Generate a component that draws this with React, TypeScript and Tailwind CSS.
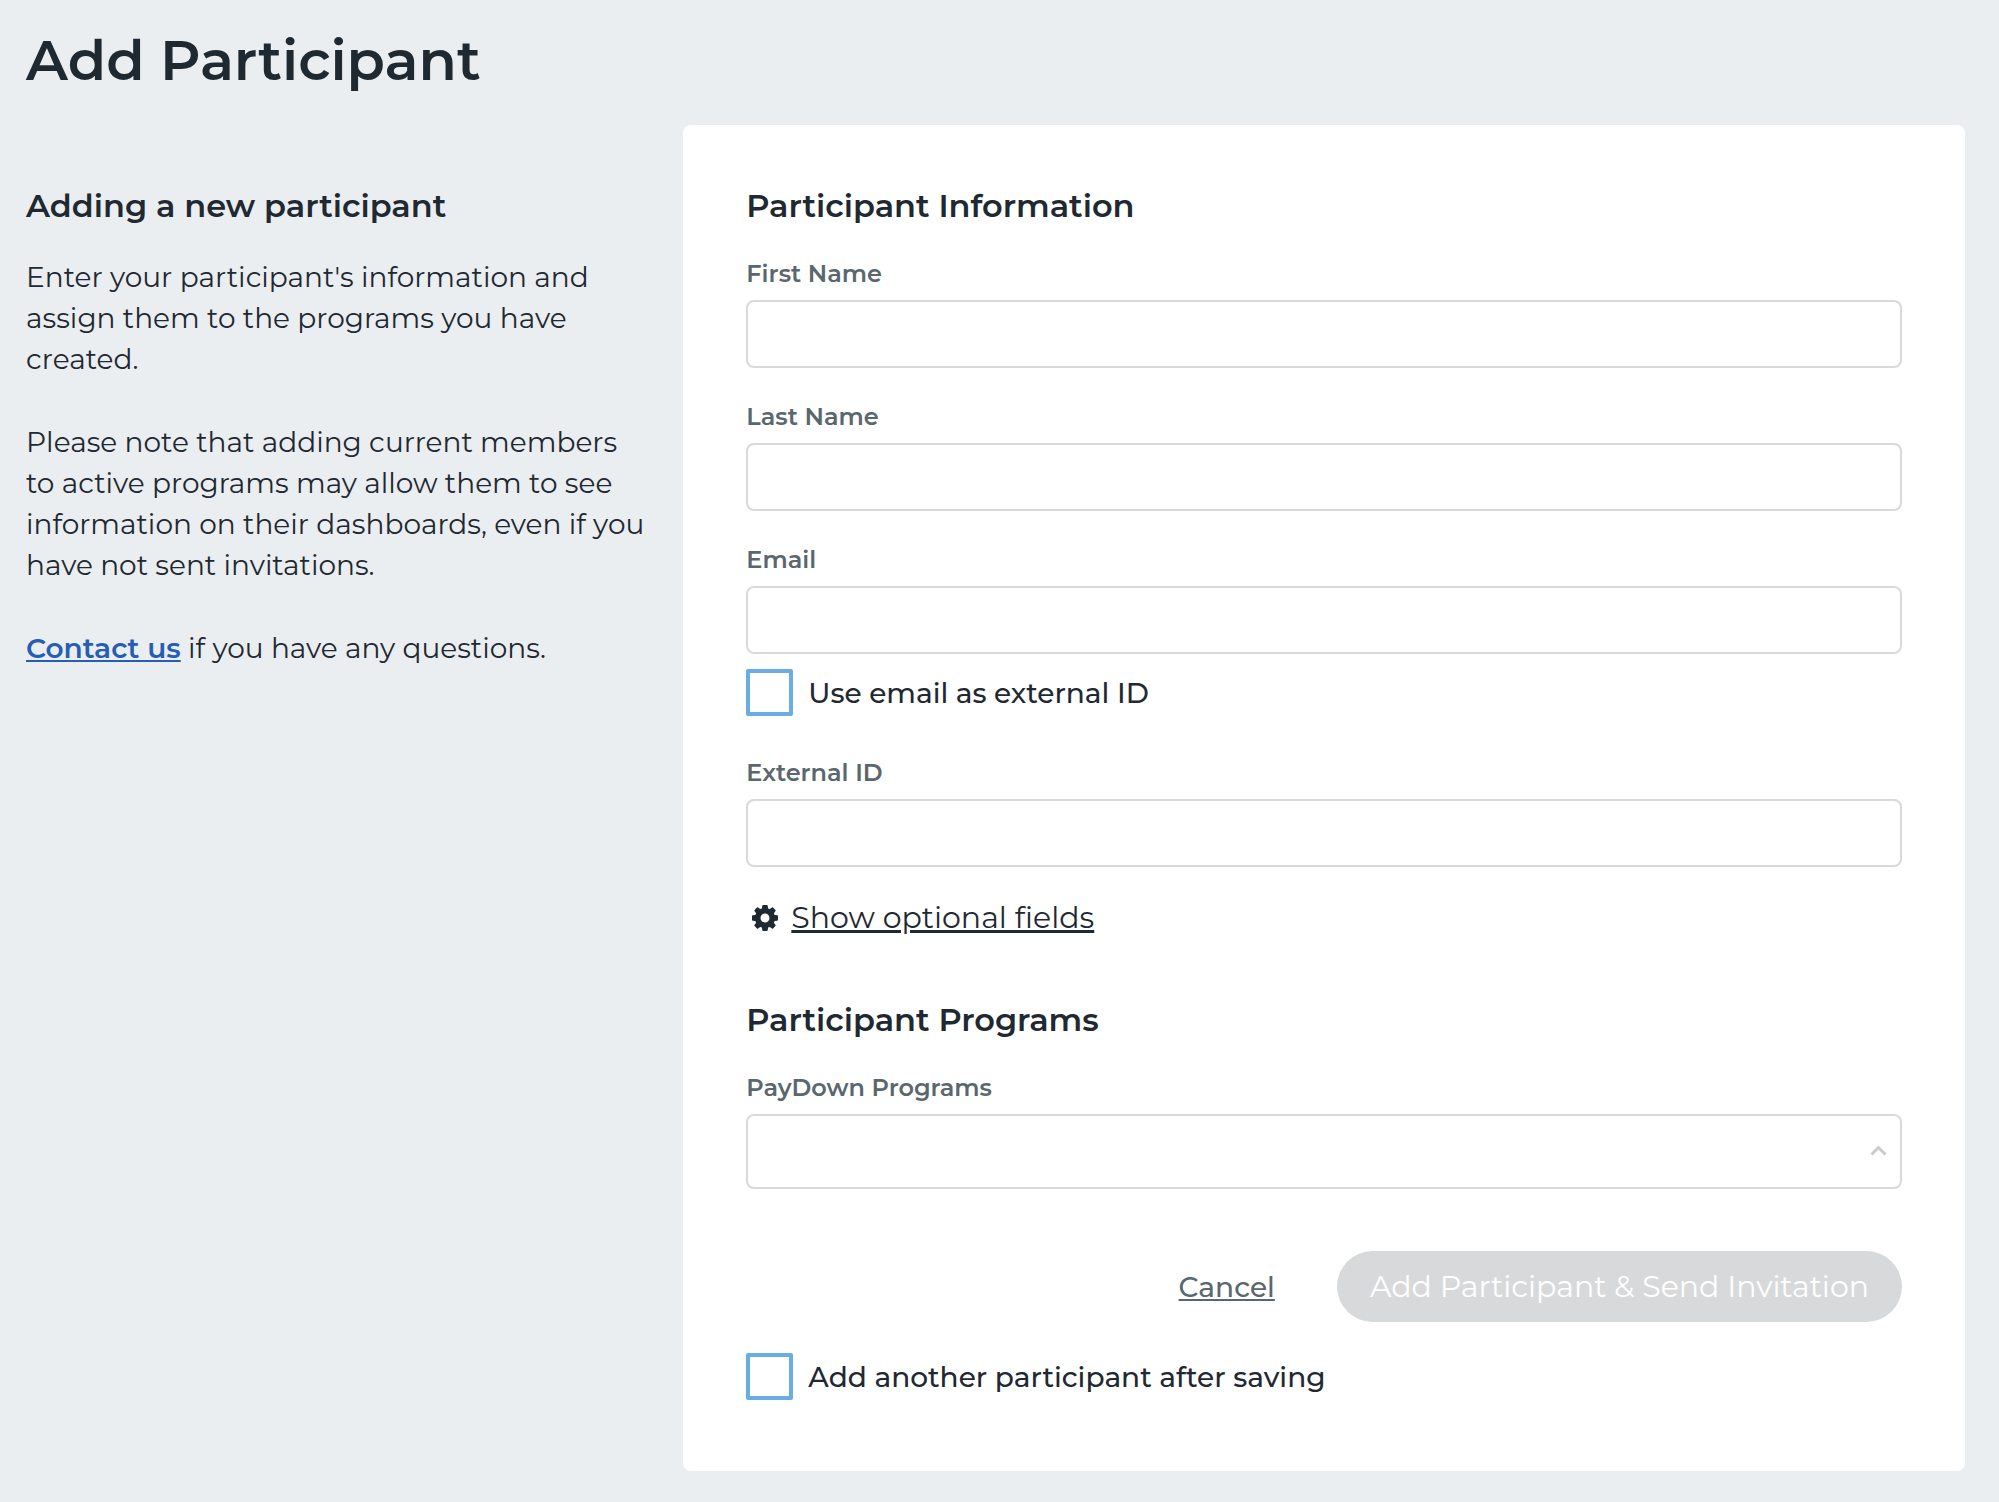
import React, { useState } from 'react';

type TextFieldProps = {
  id: string;
  label: string;
  type?: string;
};

function TextField({ id, label, type = 'text' }: TextFieldProps) {
  return (
    <div>
      <label htmlFor={id} className="block text-[24px] leading-[30px] font-semibold text-[#5a676e]">
        {label}
      </label>
      <input
        id={id}
        type={type}
        className="mt-[11px] block h-[68px] w-full rounded-lg border-2 border-[#d8d9db] bg-white px-4 text-[28px] outline-none focus:border-[#69ade2]"
      />
    </div>
  );
}

type CheckboxProps = {
  id: string;
  label: string;
  checked: boolean;
  onChange: (checked: boolean) => void;
};

function Checkbox({ id, label, checked, onChange }: CheckboxProps) {
  return (
    <div className="flex items-center gap-[15px]">
      <input
        id={id}
        type="checkbox"
        checked={checked}
        onChange={(e) => onChange(e.target.checked)}
        className="size-[47px] shrink-0 appearance-none rounded-xs border-4 border-[#69ade2] bg-white checked:bg-[#69ade2]"
      />
      <label htmlFor={id} className="text-[28px] leading-[42px] font-medium">
        {label}
      </label>
    </div>
  );
}

export default function App() {
  const [useEmail, setUseEmail] = useState(false);
  const [addAnother, setAddAnother] = useState(false);

  return (
    <div className="min-h-screen bg-[#eaeef1] pt-6 pr-[34px] pb-[31px] pl-[26px] font-[Montserrat,Inter,sans-serif] text-[#1f2931]">
      <h1 className="text-[56px] leading-[72px] font-semibold">Add Participant</h1>

      <div className="mt-[29px] flex items-start gap-[11px]">
        <aside className="w-1/3 shrink-0 pt-[61px] pr-6">
          <h2 className="text-[32px] leading-[40px] font-semibold">Adding a new participant</h2>
          <div className="mt-[31px] flex flex-col gap-[42px] text-[28px] leading-[41px]">
            <p>
              Enter your participant's information and assign them to the programs you have created.
            </p>
            <p>
              Please note that adding current members to active programs may allow them to see
              information on their dashboards, even if you have not sent invitations.
            </p>
            <p>
              <a href="#contact" className="font-semibold text-[#265db5] underline">
                Contact us
              </a>{' '}
              if you have any questions.
            </p>
          </div>
        </aside>

        <main className="flex-1 rounded-lg bg-white px-[63px] pt-[61px] pb-[71px]">
          <form onSubmit={(e) => e.preventDefault()}>
            <h2 className="text-[32px] leading-[40px] font-semibold">Participant Information</h2>

            <div className="mt-[33px] flex flex-col gap-[34px]">
              <TextField id="first-name" label="First Name" />
              <TextField id="last-name" label="Last Name" />
              <TextField id="email" label="Email" type="email" />
            </div>
            <div className="mt-[15px]">
              <Checkbox
                id="use-email"
                label="Use email as external ID"
                checked={useEmail}
                onChange={setUseEmail}
              />
            </div>
            <div className="mt-[42px]">
              <TextField id="external-id" label="External ID" />
            </div>

            <button type="button" className="mt-[30px] ml-1.5 flex items-center gap-[13px]">
              <svg className="size-[26px]" viewBox="0 0 26 26" fill="currentColor" aria-hidden="true">
                <path
                  fillRule="evenodd"
                  d="M11.2 0h3.6q.8 0 .9.8l.4 2.6 1.700.7 2.100-1.600q.6-.5 1.200.1l2.300 2.300q.6.6.1 1.200l-1.600 2.100.7 1.700 2.600.4q.8.1.8.900v3.600q0 .8-.8.900l-2.600.4-.7 1.700 1.600 2.100q.5.6-.1 1.200l-2.300 2.300q-.6.6-1.200.1l-2.100-1.600-1.700.7-.4 2.600q-.1.8-.9.800h-3.600q-.8 0-.9-.8l-.4-2.600-1.700-.7-2.100 1.600q-.6.5-1.200-.1l-2.300-2.300q-.6-.6-.1-1.200l1.600-2.100-.7-1.700-2.600-.4q-.8-.1-.8-.900v-3.600q0-.8.8-.900l2.600-.4.7-1.700-1.600-2.100q-.5-.6.1-1.200l2.300-2.300q.6-.6 1.200-.1l2.100 1.600 1.700-.7.4-2.600q.1-.8.900-.8zM13 8.500a4.500 4.500 0 1 0 0 9 4.500 4.500 0 0 0 0-9z"
                />
              </svg>
              <span className="text-[30px] leading-[42px] underline">Show optional fields</span>
            </button>

            <h2 className="mt-[61px] text-[32px] leading-[40px] font-semibold">Participant Programs</h2>
            <label
              htmlFor="programs"
              className="mt-[33px] block text-[24px] leading-[30px] font-semibold text-[#5a676e]"
            >
              PayDown Programs
            </label>
            <div className="relative mt-[11px]">
              <select
                id="programs"
                defaultValue=""
                className="block h-[75px] w-full appearance-none rounded-lg border-2 border-[#d8d9db] bg-white px-4 text-[28px] outline-none"
              >
                <option value=""></option>
              </select>
              <svg
                className="pointer-events-none absolute top-[31px] right-[15px] h-[11px] w-[17px] text-[#c9cbcd]"
                viewBox="0 0 17 11"
                fill="none"
                stroke="currentColor"
                strokeWidth={3}
                aria-hidden="true"
              >
                <path d="M1.5 9.5l7-7 7 7" />
              </svg>
            </div>

            <div className="mt-[62px] flex items-center justify-end gap-[62px]">
              <button type="button" className="text-[28px] leading-[42px] font-medium text-[#5a676e] underline">
                Cancel
              </button>
              <button
                type="submit"
                disabled
                className="h-[71px] rounded-full bg-[#d8d9db] px-[33px] text-[30px] leading-[42px] text-white"
              >
                Add Participant &amp; Send Invitation
              </button>
            </div>

            <div className="mt-[31px]">
              <Checkbox
                id="add-another"
                label="Add another participant after saving"
                checked={addAnother}
                onChange={setAddAnother}
              />
            </div>
          </form>
        </main>
      </div>
    </div>
  );
}
